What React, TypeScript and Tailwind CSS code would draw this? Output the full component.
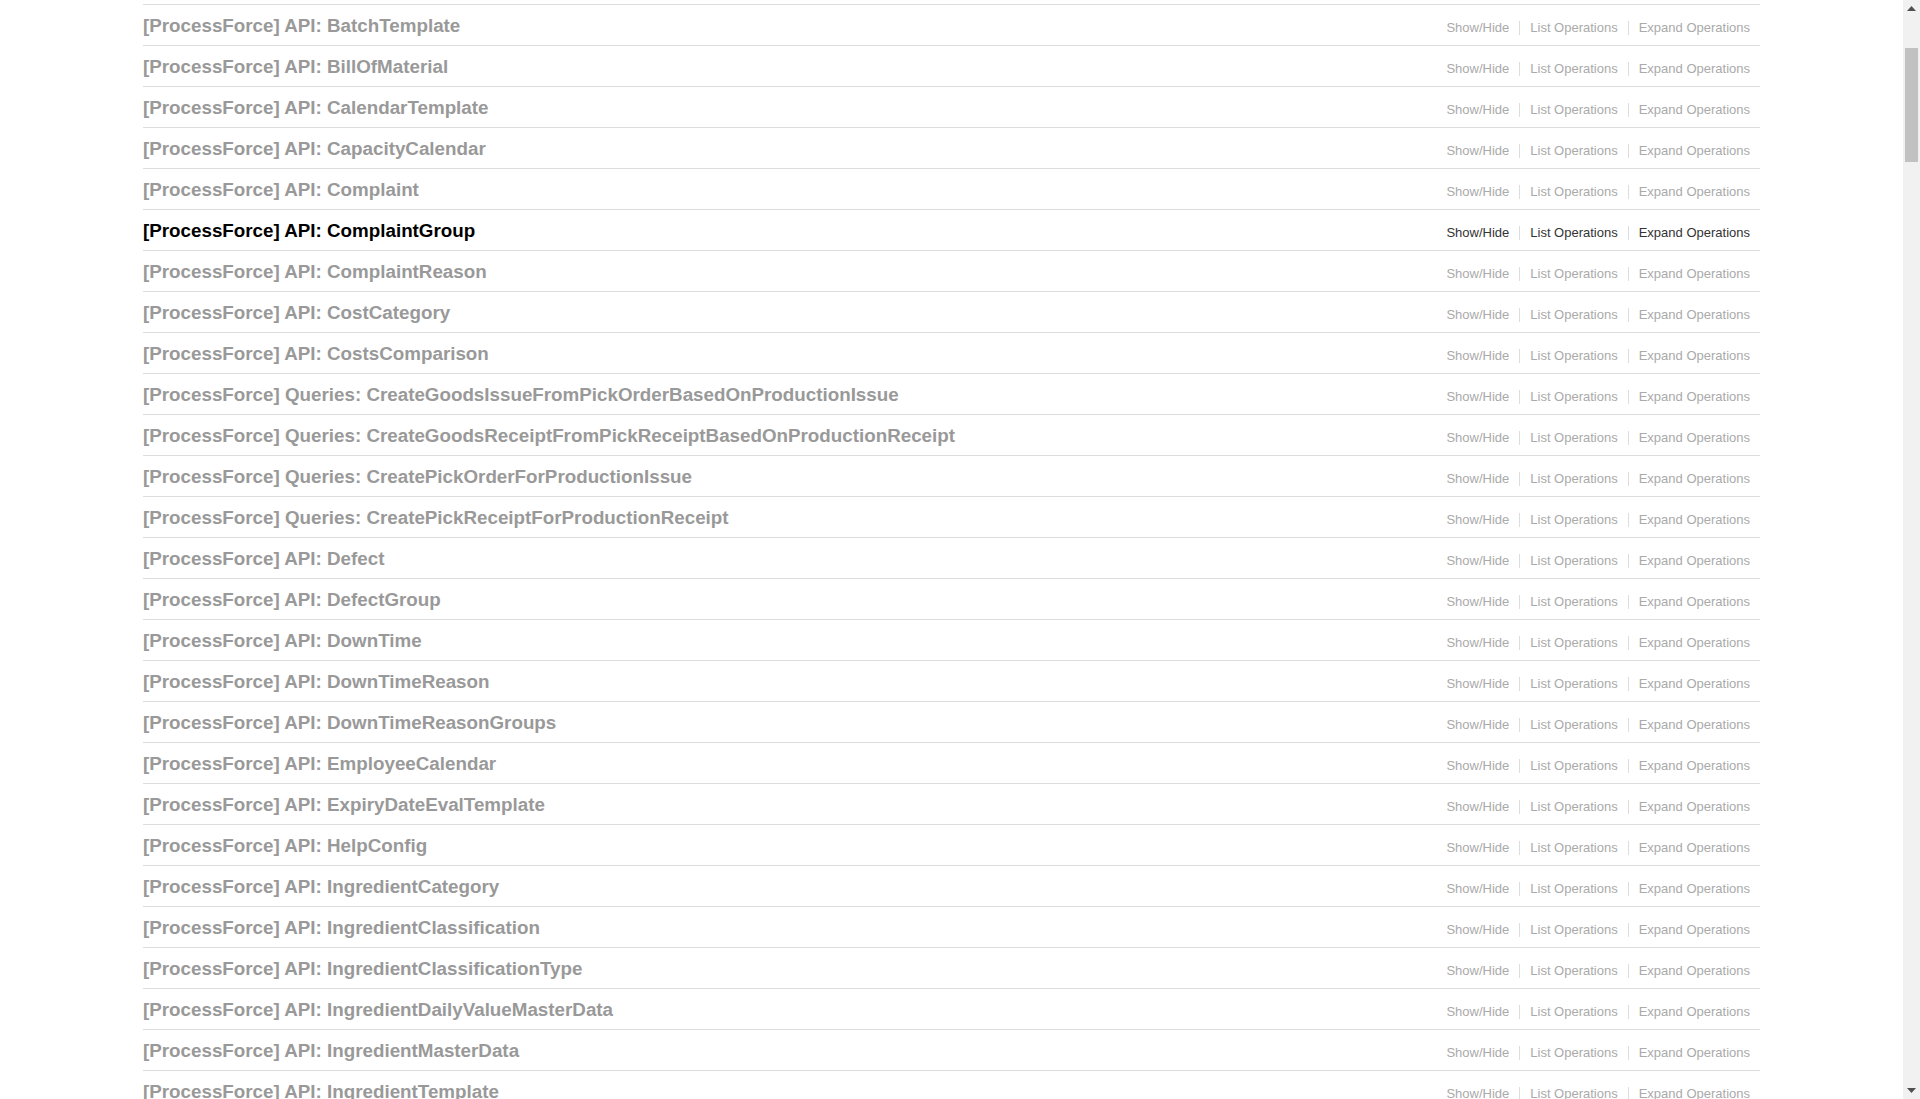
import React from "react";

const rows: string[] = [
  "[ProcessForce] API: BatchTemplate",
  "[ProcessForce] API: BillOfMaterial",
  "[ProcessForce] API: CalendarTemplate",
  "[ProcessForce] API: CapacityCalendar",
  "[ProcessForce] API: Complaint",
  "[ProcessForce] API: ComplaintGroup",
  "[ProcessForce] API: ComplaintReason",
  "[ProcessForce] API: CostCategory",
  "[ProcessForce] API: CostsComparison",
  "[ProcessForce] Queries: CreateGoodsIssueFromPickOrderBasedOnProductionIssue",
  "[ProcessForce] Queries: CreateGoodsReceiptFromPickReceiptBasedOnProductionReceipt",
  "[ProcessForce] Queries: CreatePickOrderForProductionIssue",
  "[ProcessForce] Queries: CreatePickReceiptForProductionReceipt",
  "[ProcessForce] API: Defect",
  "[ProcessForce] API: DefectGroup",
  "[ProcessForce] API: DownTime",
  "[ProcessForce] API: DownTimeReason",
  "[ProcessForce] API: DownTimeReasonGroups",
  "[ProcessForce] API: EmployeeCalendar",
  "[ProcessForce] API: ExpiryDateEvalTemplate",
  "[ProcessForce] API: HelpConfig",
  "[ProcessForce] API: IngredientCategory",
  "[ProcessForce] API: IngredientClassification",
  "[ProcessForce] API: IngredientClassificationType",
  "[ProcessForce] API: IngredientDailyValueMasterData",
  "[ProcessForce] API: IngredientMasterData",
  "[ProcessForce] API: IngredientTemplate",
];

function Row({ title, active }: { title: string; active: boolean }) {
  const link = active ? "text-[#333]" : "text-[#aaa]";
  return (
    <li className="h-[41px] border-b border-[#ddd] flex items-baseline justify-between pt-[12px]">
      <h2 className={`text-[18.8px] leading-[18px] font-bold ${active ? "text-black" : "text-[#999]"}`}>
        {title}
      </h2>
      <ul className="flex items-baseline text-[13px] leading-[14px]">
        <li className={`px-[10px] border-r border-[#ddd] ${link}`}>Show/Hide</li>
        <li className={`px-[10px] border-r border-[#ddd] ${link}`}>List Operations</li>
        <li className={`pl-[10px] pr-[10px] ${link}`}>Expand Operations</li>
      </ul>
    </li>
  );
}

export default function App() {
  return (
    <div
      className="w-full h-[1099px] overflow-hidden flex bg-white"
      style={{ fontFamily: '"Liberation Sans", Arial, Helvetica, sans-serif' }}
    >
      <main className="flex-1 min-w-0">
        <div className="w-[1617px] mx-auto pt-[4px]">
          <ul className="border-t border-[#ddd]">
            {rows.map((r, i) => (
              <Row key={r} title={r} active={i === 5} />
            ))}
          </ul>
        </div>
      </main>
      <div className="w-[17px] h-full bg-[#f1f1f1] flex flex-col">
        <div className="h-[17px] flex items-center justify-center">
          <svg width="9" height="5" viewBox="0 0 9 5">
            <polygon points="0,5 4.5,0 9,5" fill="#505050" />
          </svg>
        </div>
        <div className="mt-[31px] mx-[2px] h-[114px] bg-[#c1c1c1]" />
        <div className="flex-1" />
        <div className="h-[17px] flex items-center justify-center">
          <svg width="9" height="5" viewBox="0 0 9 5">
            <polygon points="0,0 9,0 4.5,5" fill="#505050" />
          </svg>
        </div>
      </div>
    </div>
  );
}
